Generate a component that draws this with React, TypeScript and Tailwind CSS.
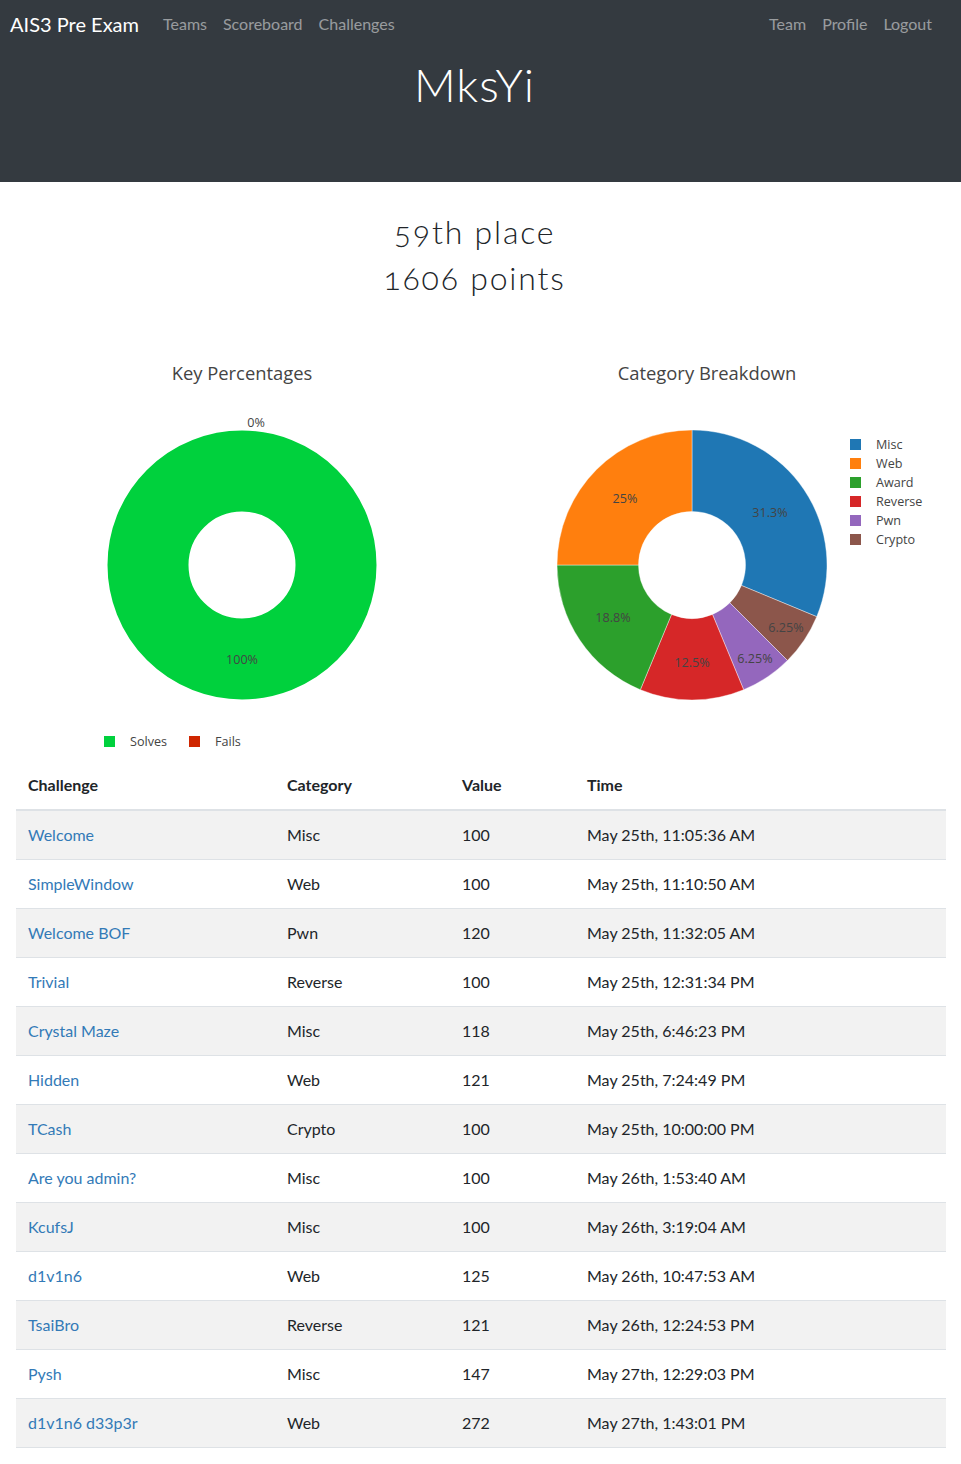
import * as React from "react"

const rows = [
  { name: "Welcome", cat: "Misc", value: 100, time: "May 25th, 11:05:36 AM" },
  { name: "SimpleWindow", cat: "Web", value: 100, time: "May 25th, 11:10:50 AM" },
  { name: "Welcome BOF", cat: "Pwn", value: 120, time: "May 25th, 11:32:05 AM" },
  { name: "Trivial", cat: "Reverse", value: 100, time: "May 25th, 12:31:34 PM" },
  { name: "Crystal Maze", cat: "Misc", value: 118, time: "May 25th, 6:46:23 PM" },
  { name: "Hidden", cat: "Web", value: 121, time: "May 25th, 7:24:49 PM" },
  { name: "TCash", cat: "Crypto", value: 100, time: "May 25th, 10:00:00 PM" },
  { name: "Are you admin?", cat: "Misc", value: 100, time: "May 26th, 1:53:40 AM" },
  { name: "KcufsJ", cat: "Misc", value: 100, time: "May 26th, 3:19:04 AM" },
  { name: "d1v1n6", cat: "Web", value: 125, time: "May 26th, 10:47:53 AM" },
  { name: "TsaiBro", cat: "Reverse", value: 121, time: "May 26th, 12:24:53 PM" },
  { name: "Pysh", cat: "Misc", value: 147, time: "May 27th, 12:29:03 PM" },
  { name: "d1v1n6 d33p3r", cat: "Web", value: 272, time: "May 27th, 1:43:01 PM" },
]

// slices clockwise from 12 o'clock
const slices = [
  { color: "#1f77b4", pct: 31.25, label: "31.3%", lx: 290, ly: 167 },
  { color: "#8c564b", pct: 6.25, label: "6.25%", lx: 306, ly: 282 },
  { color: "#9467bd", pct: 6.25, label: "6.25%", lx: 275, ly: 313 },
  { color: "#d62728", pct: 12.5, label: "12.5%", lx: 212, ly: 317 },
  { color: "#2ca02c", pct: 18.75, label: "18.8%", lx: 133, ly: 272 },
  { color: "#ff7f0e", pct: 25, label: "25%", lx: 145, ly: 153 },
]

const legend = [
  { color: "#1f77b4", name: "Misc" },
  { color: "#ff7f0e", name: "Web" },
  { color: "#2ca02c", name: "Award" },
  { color: "#d62728", name: "Reverse" },
  { color: "#9467bd", name: "Pwn" },
  { color: "#8c564b", name: "Crypto" },
]

function pt(cx: number, cy: number, r: number, a: number) {
  const rad = (a * Math.PI) / 180
  return [cx + r * Math.sin(rad), cy - r * Math.cos(rad)]
}

function arcPath(cx: number, cy: number, r0: number, r1: number, a0: number, a1: number) {
  const large = a1 - a0 > 180 ? 1 : 0
  const [x0, y0] = pt(cx, cy, r1, a0)
  const [x1, y1] = pt(cx, cy, r1, a1)
  const [x2, y2] = pt(cx, cy, r0, a1)
  const [x3, y3] = pt(cx, cy, r0, a0)
  return `M${x0},${y0} A${r1},${r1} 0 ${large} 1 ${x1},${y1} L${x2},${y2} A${r0},${r0} 0 ${large} 0 ${x3},${y3} Z`
}

function KeyChart() {
  return (
    <svg width="480" height="413" className="block" style={{ fontFamily: "'Open Sans', verdana, arial, sans-serif" }}>
      <text x="242" y="30" textAnchor="middle" fontSize="18.4" fill="#444">
        Key Percentages
      </text>
      <circle cx="242" cy="215" r="94" fill="none" stroke="#00d13d" strokeWidth="81" />
      <text x="256" y="77" textAnchor="middle" fontSize="12.6" fill="#444">
        0%
      </text>
      <text x="242" y="314" textAnchor="middle" fontSize="12.6" fill="#444">
        100%
      </text>
      <rect x="104" y="386" width="11" height="11" fill="#00d13d" />
      <text x="130" y="396" fontSize="12.6" fill="#444">
        Solves
      </text>
      <rect x="189" y="386" width="11" height="11" fill="#cf2600" />
      <text x="215" y="396" fontSize="12.6" fill="#444">
        Fails
      </text>
    </svg>
  )
}

function CategoryChart() {
  let a = 0
  return (
    <svg width="481" height="413" className="block" style={{ fontFamily: "'Open Sans', verdana, arial, sans-serif" }}>
      <text x="227" y="30" textAnchor="middle" fontSize="18.4" fill="#444">
        Category Breakdown
      </text>
      {slices.map((s, i) => {
        const a0 = a
        const a1 = a + (s.pct / 100) * 360
        a = a1
        return <path key={i} d={arcPath(212, 215, 53.5, 135, a0, a1)} fill={s.color} stroke="#fff" strokeWidth="0.4" />
      })}
      {slices.map((s, i) => (
        <text key={i} x={s.lx} y={s.ly} textAnchor="middle" fontSize="12.6" fill="#444">
          {s.label}
        </text>
      ))}
      {legend.map((l, i) => (
        <g key={l.name}>
          <rect x="370" y={89 + i * 19} width="11" height="11" fill={l.color} />
          <text x="396" y={99 + i * 19} fontSize="12.6" fill="#444">
            {l.name}
          </text>
        </g>
      ))}
    </svg>
  )
}

export default function App() {
  return (
    <div className="min-h-[1464px] bg-white text-[#212529]" style={{ fontFamily: "Lato, 'Open Sans', sans-serif" }}>
      <header className="h-[182px] bg-[#343a40]">
        <nav className="flex h-12 items-center pl-[10px] pr-[21px]">
          <span className="mr-[16px] text-[20px] text-white">AIS3 Pre Exam</span>
          <div className="flex text-base text-white/50">
            <span className="px-2">Teams</span>
            <span className="px-2">Scoreboard</span>
            <span className="px-2">Challenges</span>
          </div>
          <div className="ml-auto flex text-base text-white/50">
            <span className="px-2">Team</span>
            <span className="px-2">Profile</span>
            <span className="px-2">Logout</span>
          </div>
        </nav>
        <h1 className="pr-[12px] pt-[7px] text-center text-[46px] font-light leading-[60px] tracking-[1px] text-white">
          MksYi
        </h1>
      </header>

      <div className="pr-[12px] pt-[27px] text-center text-[32px] font-light leading-[46px] tracking-[1.8px] text-[#212529] [font-feature-settings:'onum']">
        <div>59th place</div>
        <div>1606 points</div>
      </div>

      <div className="mt-[49px] flex">
        <KeyChart />
        <CategoryChart />
      </div>

      <div className="pl-4 pr-[15px]">
        <table className="w-full table-fixed border-collapse text-base">
          <colgroup>
            <col className="w-[259px]" />
            <col className="w-[175px]" />
            <col className="w-[125px]" />
            <col />
          </colgroup>
          <thead>
            <tr className="border-b-2 border-[#dee2e6] text-left">
              <th className="px-3 pb-3 pt-[10px] font-bold leading-6">Challenge</th>
              <th className="px-3 pb-3 pt-[10px] font-bold leading-6">Category</th>
              <th className="px-3 pb-3 pt-[10px] font-bold leading-6">Value</th>
              <th className="px-3 pb-3 pt-[10px] font-bold leading-6">Time</th>
            </tr>
          </thead>
          <tbody>
            {rows.map((r, i) => (
              <tr key={r.name} className={i % 2 === 0 ? "border-b border-[#dee2e6] bg-[#f2f2f2]" : "border-b border-[#dee2e6]"}>
                <td className="px-3 py-3 leading-6 text-[#337ab7]">{r.name}</td>
                <td className="px-3 py-3 leading-6">{r.cat}</td>
                <td className="px-3 py-3 leading-6">{r.value}</td>
                <td className="px-3 py-3 leading-6">{r.time}</td>
              </tr>
            ))}
          </tbody>
        </table>
      </div>
    </div>
  )
}
